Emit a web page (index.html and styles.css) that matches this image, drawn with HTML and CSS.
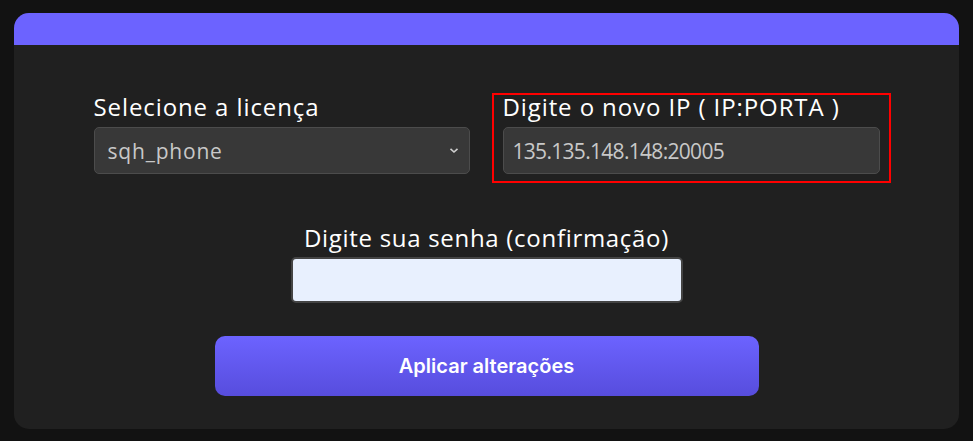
FILE: index.html
```html
<!DOCTYPE html>
<html lang="pt-BR">
<head>
<meta charset="utf-8">
<link rel="stylesheet" href="styles.css">
</head>
<body>
<div class="card">
  <div class="card-head"></div>
  <div class="card-body">
    <div class="row">
      <div class="field">
        <label class="label">Selecione a licença</label>
        <div class="select">
          <span>sqh_phone</span>
          <svg class="chev" width="10" height="7" viewBox="0 0 10 7"><path d="M1.5 1.8 L5 5 L8.5 1.8" fill="none" stroke="#cfcfcf" stroke-width="1.6"/></svg>
        </div>
      </div>
      <div class="field highlight">
        <label class="label">Digite o novo IP ( IP:PORTA )</label>
        <div class="input ip">135.135.148.148:20005</div>
      </div>
    </div>
    <div class="pass">
      <label class="label">Digite sua senha (confirmação)</label>
      <div class="input light"></div>
    </div>
    <button class="btn">Aplicar alterações</button>
  </div>
</div>
</body>
</html>
```

FILE: styles.css
```css
html, body {
  margin: 0;
  padding: 0;
  background: #121212;
}
body {
  padding: 13px 14px 0 14px;
  font-family: "Open Sans", sans-serif;
}
.card {
  width: 945px;
  height: 416px;
  background: #202020;
  border-radius: 15px;
  overflow: hidden;
  box-sizing: border-box;
}
.card-head {
  height: 32px;
  background: #6c63ff;
}
.card-body {
  display: flex;
  flex-direction: column;
  align-items: center;
  padding-top: 47px;
}
.row {
  display: flex;
  gap: 33px;
  width: 786px;
}
.field {
  display: flex;
  flex-direction: column;
  width: 376px;
}
.highlight {
  position: relative;
  width: 377px;
}
.highlight::after {
  content: "";
  position: absolute;
  top: 1px;
  bottom: -9px;
  left: -11px;
  right: -11px;
  border: 2px solid #ff0000;
  pointer-events: none;
}
.label {
  color: #ffffff;
  font-size: 24px;
  line-height: 30px;
  letter-spacing: 0.9px;
  margin-bottom: 5px;
  white-space: nowrap;
}
.select, .input {
  height: 47px;
  box-sizing: border-box;
  background: #383838;
  border: 1px solid #4c4c4c;
  border-radius: 5px;
  color: #c8c8c8;
  font-size: 21px;
  letter-spacing: 0.8px;
  display: flex;
  align-items: center;
  padding: 0 10px 0 13px;
}
.select {
  justify-content: space-between;
}
.input.ip {
  padding-left: 9px;
  letter-spacing: -0.7px;
}
.pass {
  display: flex;
  flex-direction: column;
  align-items: center;
  width: 392px;
  margin-top: 49px;
}
.pass .label {
  margin-bottom: 4px;
  letter-spacing: 0.7px;
}
.input.light {
  width: 392px;
  height: 46px;
  background: #e8f0fe;
  border: 2px solid #444444;
}
.btn {
  margin-top: 33px;
  width: 544px;
  height: 60px;
  border: none;
  border-radius: 10px;
  background: linear-gradient(#6c63ff, #574ddd);
  color: #ffffff;
  font-family: "Inter", sans-serif;
  font-weight: 600;
  font-size: 20px;
  letter-spacing: 0;
  padding: 0;
}
```
